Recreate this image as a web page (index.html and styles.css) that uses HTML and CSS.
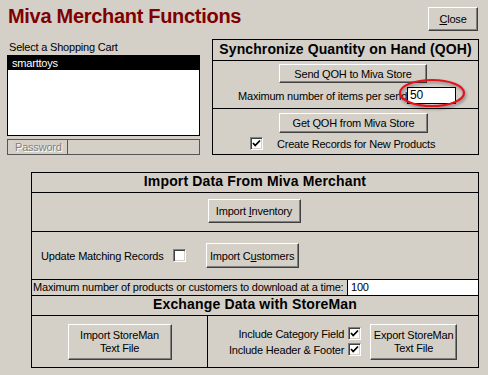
FILE: index.html
```html
<!DOCTYPE html>
<html>

<head>
  <meta charset="UTF-8">
  <title>Miva Merchant Functions</title>
  <link rel="stylesheet" href="styles.css">
</head>

<body>
  <div class="page">
    <div class="header">
      <h1 class="title">Miva Merchant Functions</h1>
      <button class="btn btn-close"><u>C</u>lose</button>
    </div>

    <div class="middle">
      <!-- cart list -->
      <div class="cart">
        <div class="cart__label">Select a Shopping Cart</div>
        <div class="cart__list">
          <div class="cart__item cart__item--selected">smarttoys</div>
        </div>
        <div class="cart__password">
          <span class="cart__password-label">Password</span>
        </div>
      </div>

      <!-- QOH box -->
      <div class="sync">
        <div class="sync__head">Synchronize Quantity on Hand (QOH)</div>
        <div class="sync__send">
          <button class="btn sync__btn">Send QOH to Miva Store</button>
          <div class="sync__max">
            <span>Maximum number of items per send</span>
            <span class="sync__input-wrap">
              <span class="field sync__input">50</span>
              <svg class="annot" width="70" height="32" viewBox="0 0 70 32">
                <ellipse cx="34" cy="15" rx="32" ry="13" fill="none" stroke="#e4121b" stroke-width="2.2" />
              </svg>
            </span>
          </div>
        </div>
        <div class="sync__get">
          <button class="btn sync__btn sync__btn--get">Get QOH from Miva Store</button>
          <div class="sync__check">
            <span class="check">
              <svg width="9" height="9" viewBox="0 0 9 9"><polyline points="1,4 3.2,6.5 8,1.5" fill="none" stroke="#000" stroke-width="1.8" /></svg>
            </span>
            <span>Create Records for New Products</span>
          </div>
        </div>
      </div>
    </div>

    <!-- import / exchange box -->
    <div class="import">
      <div class="import__head">Import Data From Miva Merchant</div>
      <div class="import__inv">
        <button class="btn import__btn">Import <u>I</u>nventory</button>
      </div>
      <div class="import__cust">
        <span>Update Matching Records</span>
        <span class="check import__cust-check"></span>
        <button class="btn import__btn import__btn--cust">Import C<u>u</u>stomers</button>
      </div>
      <div class="import__max">
        <span class="import__max-label">Maximum number of products or customers to download at a time:</span>
        <span class="import__max-input">100</span>
      </div>
      <div class="import__head">Exchange Data with StoreMan</div>
      <div class="import__ex">
        <div class="import__ex-left">
          <button class="btn import__btn-big">Import StoreMan<br>Text File</button>
        </div>
        <div class="import__ex-right">
          <div class="import__checks">
            <div class="import__check-row">
              <span>Include Category Field</span>
              <span class="check">
                <svg width="9" height="9" viewBox="0 0 9 9"><polyline points="1,4 3.2,6.5 8,1.5" fill="none" stroke="#000" stroke-width="1.8" /></svg>
              </span>
            </div>
            <div class="import__check-row">
              <span>Include Header &amp; Footer</span>
              <span class="check">
                <svg width="9" height="9" viewBox="0 0 9 9"><polyline points="1,4 3.2,6.5 8,1.5" fill="none" stroke="#000" stroke-width="1.8" /></svg>
              </span>
            </div>
          </div>
          <button class="btn import__btn-big import__btn-big--export">Export StoreMan<br>Text File</button>
        </div>
      </div>
    </div>
  </div>
</body>

</html>
```

FILE: styles.css
```css
* {
  box-sizing: border-box;
}

body {
  margin: 0;
  background-color: #d4d0c8;
  font-family: "Liberation Sans", Arial, sans-serif;
  font-size: 11px;
  letter-spacing: -0.2px;
  color: #000;
}

.page {
  width: 488px;
  height: 375px;
  padding: 7px 9px 0 7px;
  overflow: hidden;
}

/* classic 3d button */
.btn {
  padding: 0;
  background-color: #d4d0c8;
  border: 1px solid;
  border-color: #fff #404040 #404040 #fff;
  box-shadow: inset -1px -1px #808080;
  font: inherit;
  letter-spacing: inherit;
  color: #000;
}

.check {
  display: flex;
  flex: none;
  justify-content: center;
  align-items: center;
  width: 13px;
  height: 13px;
  background-color: #fff;
  border: 1px solid;
  border-color: #808080 #fff #fff #808080;
  box-shadow: inset 1px 1px #404040, inset -1px -1px #d4d0c8;
}

.field {
  display: block;
  background-color: #fff;
  border: 1px solid #000;
}

.header {
  display: flex;
  justify-content: space-between;
  align-items: flex-start;
  height: 24px;
}

.title {
  margin: -1px 0 0 1px;
  font-size: 20px;
  line-height: 20px;
  font-weight: bold;
  letter-spacing: -0.3px;
  color: #800000;
}

.btn-close {
  width: 50px;
  height: 24px;
  margin-right: 1px;
}

.middle {
  display: flex;
  justify-content: space-between;
  margin-top: 8px;
}

.cart {
  width: 193px;
}

.cart__label {
  padding: 2px 0 1px 2px;
  line-height: 13px;
}

.cart__list {
  height: 81px;
  background-color: #fff;
  border: 1px solid #000;
}

.cart__item {
  height: 14px;
  padding-left: 4px;
  line-height: 14px;
}

.cart__item--selected {
  background-color: #000;
  color: #fff;
}

.cart__password {
  display: flex;
  height: 16px;
  margin-top: 3px;
  border: 1px solid #555;
}

.cart__password-label {
  width: 60px;
  padding-left: 7px;
  line-height: 14px;
  border-right: 1px solid #555;
  color: #808080;
  text-shadow: 1px 1px #fff;
}

.sync {
  width: 267px;
  height: 116px;
  border: 1px solid #000;
}

.sync__head {
  height: 21px;
  border-bottom: 1px solid #000;
  text-align: center;
  font-size: 14px;
  font-weight: bold;
  line-height: 18px;
  letter-spacing: 0.1px;
}

.sync__send {
  height: 48px;
  padding-top: 3px;
  border-bottom: 1px solid #000;
}

.sync__btn {
  display: block;
  width: 148px;
  height: 19px;
  margin-left: 66px;
}

.sync__btn--get {
  width: 149px;
  height: 20px;
}

.sync__max {
  display: flex;
  align-items: center;
  height: 17px;
  margin-top: 4px;
  padding-left: 25px;
}

.sync__input-wrap {
  position: relative;
}

.sync__input {
  width: 49px;
  height: 17px;
  padding-left: 2px;
  font-size: 12px;
  line-height: 15px;
}

.annot {
  position: absolute;
  left: -9px;
  top: -9px;
  filter: drop-shadow(1px 2px 1.5px rgba(0, 0, 0, 0.4));
}

.sync__get {
  padding-top: 4px;
}

.sync__check {
  display: flex;
  align-items: center;
  column-gap: 14px;
  margin-top: 4px;
  padding-left: 37px;
}

.import {
  width: 448px;
  height: 196px;
  margin: 17px 0 0 24px;
  border: 1px solid #000;
  display: flex;
  flex-direction: column;
}

.import__head {
  height: 20px;
  border-bottom: 1px solid #000;
  text-align: center;
  font-size: 14px;
  font-weight: bold;
  line-height: 17px;
  letter-spacing: 0.15px;
}

.import__inv {
  display: flex;
  justify-content: center;
  height: 39px;
  padding: 6px 2px 0 0;
  border-bottom: 1px solid #000;
}

.import__btn {
  width: 93px;
  height: 24px;
}

.import__cust {
  display: flex;
  align-items: center;
  height: 48px;
  padding-left: 9px;
  border-bottom: 1px solid #000;
}

.import__cust-check {
  margin-left: 9px;
}

.import__btn--cust {
  height: 25px;
  margin-left: 20px;
}

.import__max {
  display: flex;
  height: 16px;
  border-bottom: 1px solid #000;
  line-height: 15px;
}

.import__max-label {
  width: 315px;
  padding-left: 1px;
}

.import__max-input {
  flex: 1;
  padding-left: 3px;
  background-color: #fff;
  border-left: 1px solid #000;
}

.import__ex {
  display: flex;
  flex: 1;
}

.import__ex-left {
  display: flex;
  justify-content: center;
  align-items: center;
  width: 176px;
  border-right: 1px solid #000;
}

.import__btn-big {
  width: 104px;
  height: 36px;
  line-height: 13px;
}

.import__btn-big--export {
  width: 87px;
}

.import__ex-right {
  display: flex;
  flex: 1;
  justify-content: center;
  align-items: center;
  column-gap: 9px;
}

.import__check-row {
  display: flex;
  justify-content: flex-end;
  align-items: center;
  column-gap: 4px;
  height: 16px;
}
```
